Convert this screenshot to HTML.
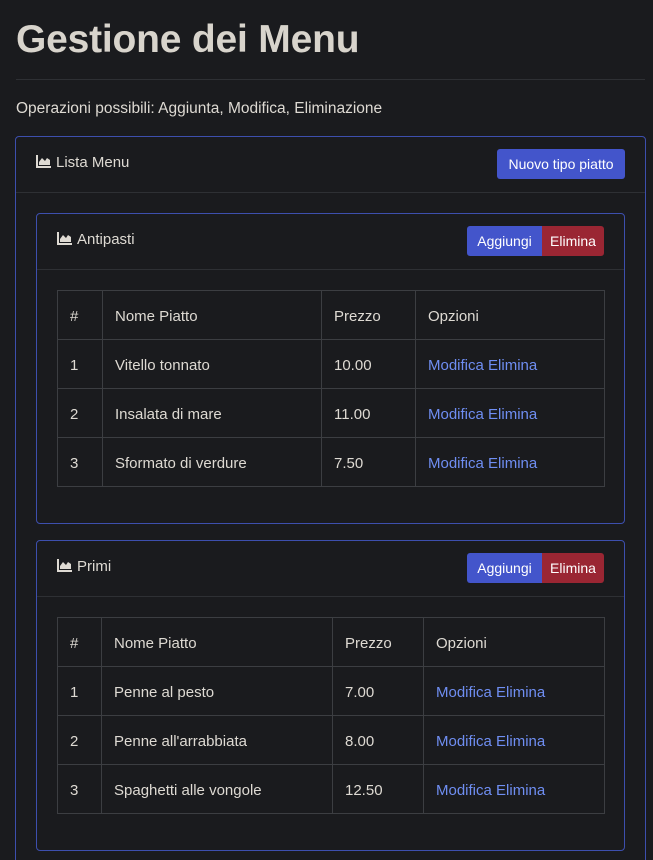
<!DOCTYPE html>
<html style="height:860px;overflow:hidden"><head><meta charset="utf-8"><style>
*{box-sizing:border-box;margin:0;padding:0}
body{width:653px;height:860px;overflow:hidden;background:#1a1b1e;color:#dedad3;font-family:"Liberation Sans",sans-serif;position:relative}
.abs{position:absolute}
h1{position:absolute;left:16px;top:18px;font-size:39px;font-weight:bold;color:#d8d4cc;letter-spacing:-0.2px}
.hr{position:absolute;left:16px;width:629px;top:79px;height:1px;background:#2e3034}
.card{position:absolute;border:1px solid #3d4fae;border-radius:4px}
.hdr{position:absolute;left:0;right:0;top:0;height:56px;border-bottom:1px solid #2e3034}
.btn{position:absolute;height:30px;color:#fff;font-size:14px;line-height:31px;text-align:center;border-radius:3px}
.blue{background:#4355cb}.red{background:#9a2633}
table{position:absolute;border-collapse:collapse;font-size:15px}
td{border:1px solid #3c3e42;height:49px;padding:2px 0 0 12px;vertical-align:middle}
a{color:#6f8ef2;text-decoration:none}
.ic{display:inline-block;vertical-align:-1px;margin-right:5px}
</style></head><body>
<h1>Gestione dei Menu</h1>
<div class="hr"></div>
<div class="abs" style="left:16px;top:100px;font-size:15.5px">Operazioni possibili: Aggiunta, Modifica, Eliminazione</div>

<div class="card" style="left:15px;top:136px;width:631px;height:760px">
 <div class="hdr" style="height:56px"></div>
 <div class="abs" style="left:20px;top:17px;font-size:15px"><svg class="ic" width="15" height="13" viewBox="0 0 15 13"><path d="M0 0h2v11h13v2H0z M3 10V7l3-4 3 3 2-3 3 2v5z" fill="#dedad3"/></svg>Lista Menu</div>
 <div class="btn blue" style="left:481px;top:12px;width:128px">Nuovo tipo piatto</div>

 <div class="card" style="left:20px;top:76px;width:589px;height:311px">
  <div class="hdr"></div>
  <div class="abs" style="left:20px;top:17px;font-size:15px"><svg class="ic" width="15" height="13" viewBox="0 0 15 13"><path d="M0 0h2v11h13v2H0z M3 10V7l3-4 3 3 2-3 3 2v5z" fill="#dedad3"/></svg>Antipasti</div>
  <div class="btn blue" style="left:430px;top:12px;width:75px;border-radius:3px 0 0 3px">Aggiungi</div>
  <div class="btn red" style="left:505px;top:12px;width:62px;border-radius:0 3px 3px 0">Elimina</div>
  <table style="left:20px;top:76px;width:548px">
   <tr><td style="width:45px">#</td><td style="width:219px">Nome Piatto</td><td style="width:94px">Prezzo</td><td>Opzioni</td></tr>
   <tr><td>1</td><td>Vitello tonnato</td><td>10.00</td><td><a>Modifica</a> <a>Elimina</a></td></tr>
   <tr><td>2</td><td>Insalata di mare</td><td>11.00</td><td><a>Modifica</a> <a>Elimina</a></td></tr>
   <tr><td>3</td><td>Sformato di verdure</td><td>7.50</td><td><a>Modifica</a> <a>Elimina</a></td></tr>
  </table>
 </div>

 <div class="card" style="left:20px;top:403px;width:589px;height:311px">
  <div class="hdr"></div>
  <div class="abs" style="left:20px;top:17px;font-size:15px"><svg class="ic" width="15" height="13" viewBox="0 0 15 13"><path d="M0 0h2v11h13v2H0z M3 10V7l3-4 3 3 2-3 3 2v5z" fill="#dedad3"/></svg>Primi</div>
  <div class="btn blue" style="left:430px;top:12px;width:75px;border-radius:3px 0 0 3px">Aggiungi</div>
  <div class="btn red" style="left:505px;top:12px;width:62px;border-radius:0 3px 3px 0">Elimina</div>
  <table style="left:20px;top:76px;width:548px">
   <tr><td style="width:44px">#</td><td style="width:231px">Nome Piatto</td><td style="width:91px">Prezzo</td><td>Opzioni</td></tr>
   <tr><td>1</td><td>Penne al pesto</td><td>7.00</td><td><a>Modifica</a> <a>Elimina</a></td></tr>
   <tr><td>2</td><td>Penne all'arrabbiata</td><td>8.00</td><td><a>Modifica</a> <a>Elimina</a></td></tr>
   <tr><td>3</td><td>Spaghetti alle vongole</td><td>12.50</td><td><a>Modifica</a> <a>Elimina</a></td></tr>
  </table>
 </div>
</div>
</body></html>
